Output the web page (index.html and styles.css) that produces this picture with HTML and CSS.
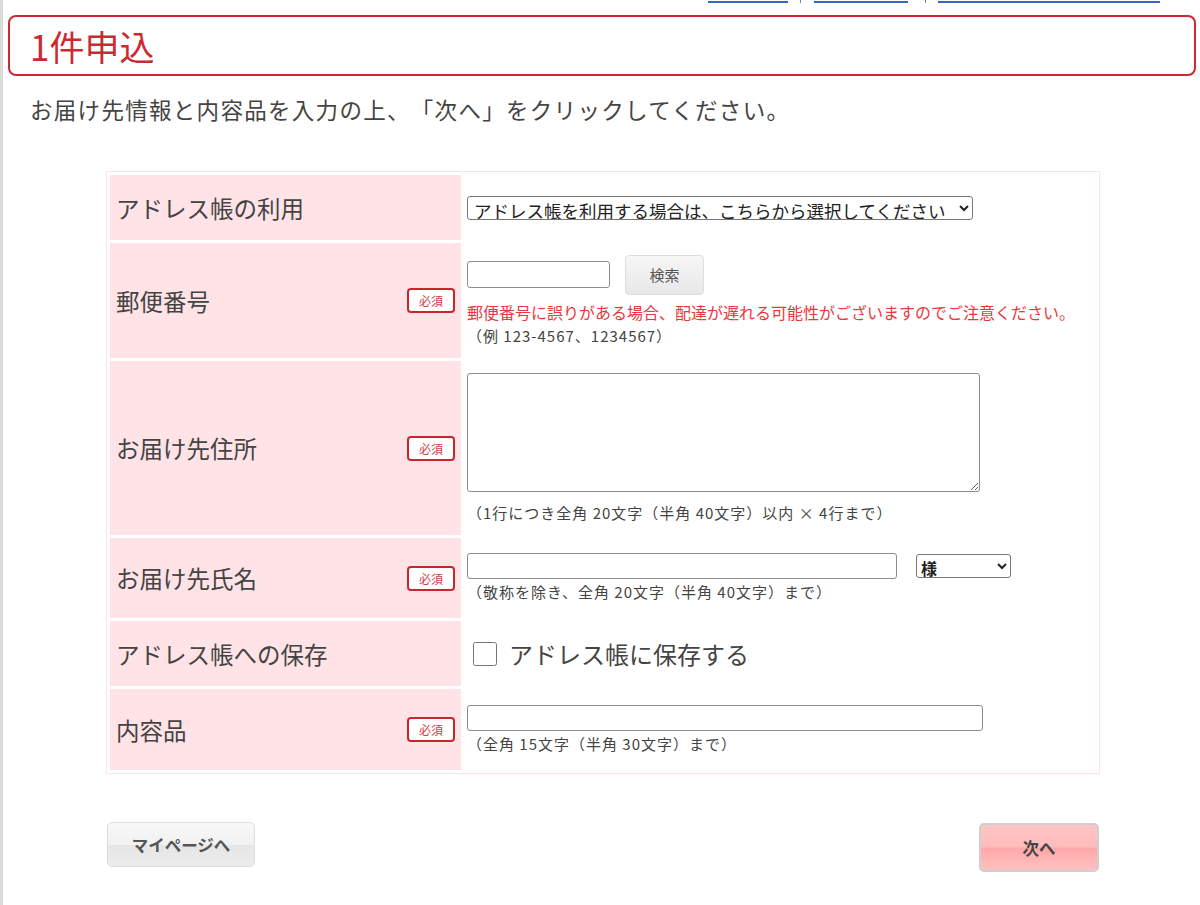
FILE: index.html
```html
<!DOCTYPE html>
<html lang="ja">
<head>
    <meta charset="UTF-8">
    <meta name="viewport" content="width=device-width, initial-scale=1.0">
    <title>1件申込</title>
    <link rel="stylesheet" href="styles.css">
</head>
<body>
    <div class="page">
        <nav class="toplinks">
            <a href="#" class="link-a" aria-label="マイページ"></a>
            <span class="sep sep-1"></span>
            <a href="#" class="link-b" aria-label="ご利用ガイド"></a>
            <span class="sep sep-2"></span>
            <a href="#" class="link-c" aria-label="よくあるご質問"></a>
        </nav>

        <h1 class="title">1件申込</h1>
        <p class="lead">お届け先情報と内容品を入力の上、「次へ」をクリックしてください。</p>

        <table class="form-table">
            <tr class="row-book">
                <th><div class="label">アドレス帳の利用</div></th>
                <td>
                    <select class="book-select">
                        <option>アドレス帳を利用する場合は、こちらから選択してください</option>
                    </select>
                </td>
            </tr>
            <tr class="row-zip">
                <th><div class="label">郵便番号<span class="req">必須</span></div></th>
                <td>
                    <div class="zip-line">
                        <input type="text" class="zip-input">
                        <button class="btn-search">検索</button>
                    </div>
                    <p class="warn">郵便番号に誤りがある場合、配達が遅れる可能性がございますのでご注意ください。</p>
                    <p class="note">（例 123-4567、1234567）</p>
                </td>
            </tr>
            <tr class="row-addr">
                <th><div class="label">お届け先住所<span class="req">必須</span></div></th>
                <td>
                    <textarea class="addr-input"></textarea>
                    <p class="note">（1行につき全角 20文字（半角 40文字）以内 × 4行まで）</p>
                </td>
            </tr>
            <tr class="row-name">
                <th><div class="label">お届け先氏名<span class="req">必須</span></div></th>
                <td>
                    <div class="name-line">
                        <input type="text" class="name-input">
                        <select class="honor-select">
                            <option>様</option>
                            <option>御中</option>
                        </select>
                    </div>
                    <p class="note">（敬称を除き、全角 20文字（半角 40文字）まで）</p>
                </td>
            </tr>
            <tr class="row-save">
                <th><div class="label">アドレス帳への保存</div></th>
                <td>
                    <label class="save-check"><input type="checkbox"> アドレス帳に保存する</label>
                </td>
            </tr>
            <tr class="row-item">
                <th><div class="label">内容品<span class="req">必須</span></div></th>
                <td>
                    <input type="text" class="item-input">
                    <p class="note">（全角 15文字（半角 30文字）まで）</p>
                </td>
            </tr>
        </table>

        <div class="actions">
            <button class="btn-back">マイページへ</button>
            <button class="btn-next">次へ</button>
        </div>
    </div>
</body>
</html>
```

FILE: styles.css
```css
body {
    margin: 0;
    background-color: #ffffff;
    font-family: "Noto Sans CJK JP", "Noto Sans", sans-serif;
    color: #444;
    text-spacing-trim: space-all;
}

.page {
    border-left: 3px solid #dcdcd6;
    min-height: 905px;
    box-sizing: border-box;
}

/* links cut off at the top of the window */
.toplinks {
    display: flex;
    align-items: flex-end;
    height: 3px;
    overflow: hidden;
    padding-left: 705px;
}

.toplinks a {
    display: block;
    height: 20px;
    border-bottom: 2px solid #3a62c2;
}

.link-a { width: 80px; }
.link-b { width: 94px; }
.link-c { width: 222px; }

.sep {
    width: 1px;
    height: 6px;
    background-color: #888;
    align-self: flex-start;
}

.sep-1 { margin: 0 13px 0 12px; }
.sep-2 { margin: 0 12px 0 17px; }

.title {
    margin: 12px 4px 0 5px;
    height: 57px;
    padding: 0 0 0 20px;
    border: 2px solid #cc2a33;
    border-radius: 8px;
    font-size: 35px;
    font-weight: normal;
    line-height: 57px;
    color: #cc2a33;
}

.lead {
    margin: 17px 0 0 27px;
    font-size: 22.5px;
    letter-spacing: 1.3px;
    line-height: 32px;
    color: #444;
}

.form-table {
    margin: 46px 0 0 103px;
    width: 994px;
    border: 1px solid #fbe4e6;
    border-spacing: 3px;
}

.form-table th {
    width: 351px;
    padding: 0 6px;
    background-color: #ffe3e6;
    text-align: left;
    font-weight: normal;
    box-sizing: border-box;
}

.form-table td {
    padding: 0 3px;
    vertical-align: middle;
}

.label {
    display: flex;
    justify-content: space-between;
    align-items: center;
    font-size: 23.5px;
    line-height: 32px;
    color: #444;
}

.req {
    width: 44px;
    height: 21px;
    border: 2px solid #c8252d;
    border-radius: 4px;
    font-size: 12px;
    line-height: 21px;
    text-align: center;
    color: #d2404a;
    background-color: #fff;
}

.row-book th, .row-book td { height: 65px; }
.row-zip th, .row-zip td { height: 115px; }
.row-addr th, .row-addr td { height: 174px; }
.row-name th, .row-name td { height: 80px; }
.row-save th, .row-save td { height: 65px; }
.row-item th, .row-item td { height: 81px; }

input[type="text"], textarea {
    border: 1px solid #8e8e8e;
    border-radius: 3px;
    box-sizing: border-box;
    font-family: inherit;
}

select {
    border: 1px solid #777;
    border-radius: 3px;
    background-color: #fff;
    font-family: inherit;
    color: #222;
}

.book-select {
    display: block;
    width: 506px;
    height: 24px;
    font-size: 17.5px;
    padding: 0 2px;
}

.zip-line, .name-line {
    display: flex;
    align-items: center;
}

.zip-input {
    width: 143px;
    height: 27px;
}

.btn-search {
    margin-left: 15px;
    width: 79px;
    height: 40px;
    border: 1px solid #dedede;
    border-radius: 4px;
    background: linear-gradient(#f6f6f6, #e8e8e8);
    font-family: inherit;
    font-size: 15px;
    color: #555;
}

.warn {
    margin: 6px 0 0 0;
    font-size: 16px;
    line-height: 22px;
    color: #e8383d;
}

.note {
    margin: 2px 0 0 0;
    font-size: 15px;
    letter-spacing: 1px;
    line-height: 22px;
    color: #444;
}

.addr-input {
    display: block;
    width: 513px;
    height: 119px;
    margin-bottom: 10px;
}

.name-input {
    width: 430px;
    height: 26px;
}

.honor-select {
    margin-left: 19px;
    width: 95px;
    height: 24px;
    font-size: 16px;
    font-weight: bold;
}

.item-input {
    display: block;
    width: 516px;
    height: 26px;
}

.save-check {
    display: flex;
    align-items: center;
    font-size: 24px;
    color: #444;
}

.save-check input {
    width: 24px;
    height: 24px;
    margin: 0 12px 0 6px;
}

.actions {
    display: flex;
    justify-content: space-between;
    align-items: flex-start;
    margin: 48px 0 0 104px;
    width: 992px;
}

.btn-back {
    width: 148px;
    height: 45px;
    border: 1px solid #ddd;
    border-radius: 5px;
    background: linear-gradient(#f8f8f8 0%, #f1f1f1 50%, #e6e6e6 52%, #ececec 100%);
    font-family: inherit;
    font-size: 16.5px;
    font-weight: bold;
    color: #555;
}

.btn-next {
    margin-top: 1px;
    width: 120px;
    height: 49px;
    border: 2px solid #cfcfcf;
    border-radius: 5px;
    background: linear-gradient(#ffc4c4 0%, #ffbcbc 48%, #ffa9a9 52%, #ffc0c0 100%);
    font-family: inherit;
    font-size: 16.5px;
    font-weight: bold;
    color: #444;
}
```
